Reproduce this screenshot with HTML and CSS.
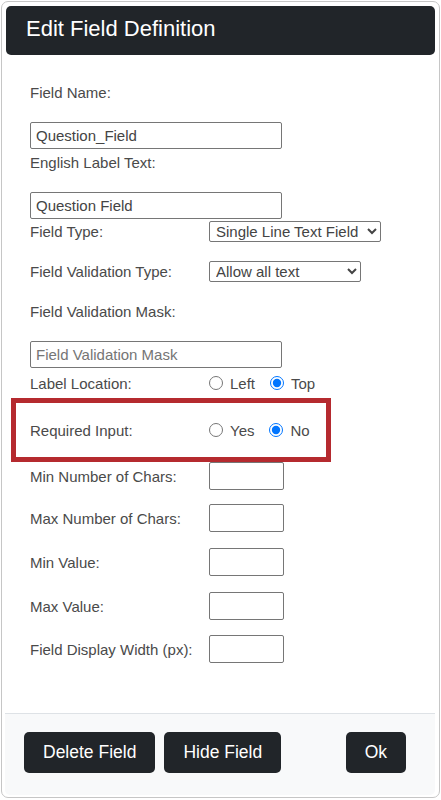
FILE: index.html
```html
<!DOCTYPE html>
<html lang="en">
<head>
<meta charset="utf-8">
<title>Edit Field Definition</title>
<link rel="stylesheet" href="styles.css">
</head>
<body>
<div class="modal">
  <div class="header"><h1 class="title">Edit Field Definition</h1></div>
  <div class="body">
    <div class="label-row r-name">Field Name:</div>
    <input class="text-input in-first" type="text" value="Question_Field">
    <div class="label-row">English Label Text:</div>
    <input class="text-input in-first" type="text" value="Question Field">
    <div class="field-row">
      <span class="label">Field Type:</span>
      <select class="select select-type"><option>Single Line Text Field</option></select>
    </div>
    <div class="field-row gap-16">
      <span class="label">Field Validation Type:</span>
      <select class="select select-valid"><option>Allow all text</option></select>
    </div>
    <div class="field-row gap-16">
      <span class="label">Field Validation Mask:</span>
    </div>
    <input class="text-input in-mask" type="text" placeholder="Field Validation Mask">
    <div class="field-row gap-3">
      <span class="label">Label Location:</span>
      <div class="radios">
        <label class="opt"><input class="radio" type="radio" name="loc">Left</label>
        <label class="opt"><input class="radio" type="radio" name="loc" checked>Top</label>
      </div>
    </div>
    <div class="field-row required">
      <span class="label">Required Input:</span>
      <div class="radios">
        <label class="opt"><input class="radio" type="radio" name="req">Yes</label>
        <label class="opt"><input class="radio" type="radio" name="req" checked>No</label>
      </div>
    </div>
    <div class="field-row small-row">
      <span class="label">Min Number of Chars:</span>
      <input class="small-input" type="text">
    </div>
    <div class="field-row small-row gap-14">
      <span class="label">Max Number of Chars:</span>
      <input class="small-input" type="text">
    </div>
    <div class="field-row small-row gap-16">
      <span class="label">Min Value:</span>
      <input class="small-input" type="text">
    </div>
    <div class="field-row small-row gap-16">
      <span class="label">Max Value:</span>
      <input class="small-input" type="text">
    </div>
    <div class="field-row small-row gap-15">
      <span class="label">Field Display Width (px):</span>
      <input class="small-input" type="text">
    </div>
  </div>
  <div class="footer">
    <button class="btn" type="button">Delete Field</button>
    <button class="btn" type="button">Hide Field</button>
    <button class="btn btn-ok" type="button">Ok</button>
  </div>
</div>
</body>
</html>
```

FILE: styles.css
```css
* { box-sizing: border-box; }

html, body {
  margin: 0;
  padding: 0;
  background: #ffffff;
}

body {
  font-family: "Liberation Sans", Arial, sans-serif;
  color: #4a4a4a;
}

.modal {
  margin: 1px 0 0 1px;
  width: 439px;
  height: 797px;
  border: 1px solid #c6c6c6;
  border-radius: 7px;
  padding: 4px 4px 2px 4px;
  display: flex;
  flex-direction: column;
}

.header {
  background: #212529;
  border-radius: 5px;
  height: 49px;
  padding: 0 20px 4px;
  flex: none;
}

.title {
  margin: 0;
  font-size: 22px;
  font-weight: normal;
  line-height: 45px;
  color: #ffffff;
}

.body {
  padding-left: 24px;
  display: flex;
  flex-direction: column;
  align-items: flex-start;
}

.label-row {
  height: 26px;
  display: flex;
  align-items: center;
  font-size: 15px;
  color: #4a4a4a;
}

.r-name { margin-top: 24px; }

.field-row {
  display: flex;
  align-items: center;
  height: 24px;
  font-size: 15px;
}

.gap-3 { margin-top: 3px; }
.gap-14 { margin-top: 14px; }
.gap-15 { margin-top: 15px; }
.gap-16 { margin-top: 16px; }

.label {
  width: 179px;
  flex: none;
  font-size: 15px;
  color: #4a4a4a;
}

.text-input {
  width: 252px;
  height: 27px;
  border: 1px solid #767676;
  border-radius: 2px;
  padding: 0 5px;
  font: 15px "Liberation Sans", Arial, sans-serif;
  color: #444444;
  background: #ffffff;
}

.text-input::placeholder { color: #757575; }

.in-first { margin-top: 17px; }
.in-mask { margin-top: 18px; }

.select {
  height: 21px;
  border: 1px solid #767676;
  border-radius: 2px;
  font: 15px "Liberation Sans", Arial, sans-serif;
  color: #444444;
  background: #ffffff;
  padding: 0 2px;
}

.select-type { width: 172px; }
.select-valid { width: 152px; }

.radios {
  display: flex;
  align-items: center;
}

.opt {
  display: flex;
  align-items: center;
  margin-right: 15px;
  font-size: 15px;
  color: #4a4a4a;
}

.radio {
  margin: 0 7px 0 0;
  width: 14px;
  height: 14px;
}

.required {
  margin-top: 3px;
  margin-left: -19px;
  width: 320px;
  height: 64px;
  border: 5px solid #b52a2f;
  padding-left: 14px;
}

.small-row { height: 28px; }

.small-input {
  width: 75px;
  height: 28px;
  border: 1px solid #767676;
  border-radius: 2px;
  background: #ffffff;
}

.footer {
  margin-top: auto;
  margin-left: -1px;
  height: 82px;
  background: #f8f9fa;
  border-top: 1px solid #dee2e6;
  border-radius: 0 0 5px 5px;
  padding: 18px 29px 0 19px;
  display: flex;
  align-items: flex-start;
  gap: 9px;
  flex: none;
}

.btn {
  height: 41px;
  padding: 0 19px;
  background: #212529;
  color: #ffffff;
  border: 0;
  border-radius: 5px;
  font: 17.5px "Liberation Sans", Arial, sans-serif;
}

.btn-ok { margin-left: auto; }
```
